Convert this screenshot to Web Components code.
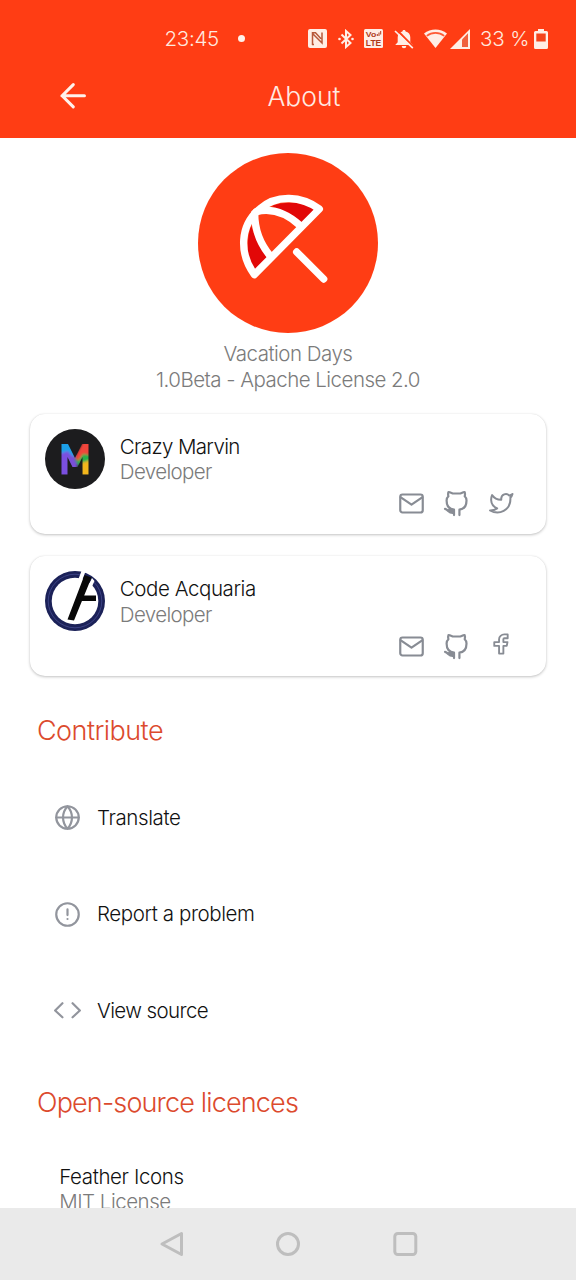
<!DOCTYPE html>
<html lang="en">
<head>
<meta charset="utf-8">
<title>About</title>
<style>
html,body{margin:0;padding:0;background:#fff}
body{font-family:Inter,"Liberation Sans",sans-serif;font-weight:300;color:#111}
</style>
</head>
<body>
<about-screen></about-screen>
<script>
function define(name, html, after) {
  const tpl = document.createElement('template');
  tpl.innerHTML = html;
  customElements.define(name, class extends HTMLElement {
    constructor() {
      super();
      this.attachShadow({ mode: 'open' }).appendChild(tpl.content.cloneNode(true));
    }
    connectedCallback() { if (after) after.call(this); }
  });
}

/* Single line of text whose tracking is adjusted to a given width. */
define('fit-text', `<style>:host{display:block;white-space:nowrap}span{display:inline-block}</style><span><slot></slot></span>`, function () {
  const span = this.shadowRoot.querySelector('span');
  const n = this.textContent.length;
  const target = parseFloat(this.getAttribute('w'));
  const natural = span.getBoundingClientRect().width;
  if (target && natural) {
    const ls = (target - natural) / n;
    this.style.letterSpacing = ls.toFixed(3) + 'px';
  }
});

const ICONS = {
  mail: '<rect x="2" y="4" width="20" height="16" rx="2"/><path d="M2.500 6.500L12 13l9.500-6.500"/>',
  github: '<path d="M9.800 22.300v-4.800C5.800 17 3.200 14 3.200 9.300c0-1.600.6-2.800 1.600-3.700-.4-1.500-.3-2.800.1-3.800 1.400.2 2.600.9 3.700 1.300h6.900c1.100-.4 2.300-1.100 3.700-1.300.4 1 .5 2.300.1 3.800 1 .9 1.600 2.100 1.600 3.700 0 4.700-2.600 7.700-6.300 8.200v4.800M9.300 20.200c-4.300.6-4.400-2.500-7.500-3.400M5 17.800c1.500.8 2.500 1 4.500 1"/>',
  twitter: '<path d="M23 3a10.900 10.900 0 0 1-3.140 1.530 4.480 4.480 0 0 0-7.860 3v1A10.660 10.660 0 0 1 3 4s-4 9 5 13a11.640 11.640 0 0 1-7 2c9 5 20 0 20-11.500a4.500 4.500 0 0 0-.08-.83A7.720 7.720 0 0 0 23 3z"/>',
  facebook: '<path d="M19.500 2h-3.500a5.500 5 0 0 0-5.500 5v3H5.500v4h5v8h4.500v-8h3.500l.8-4H15V7a1 1 0 0 1 1-1h3.500z"/>',
  globe: '<circle cx="12" cy="12" r="10"/><path d="M2 12h20M12 2a15.300 15.300 0 0 1 4 10 15.300 15.300 0 0 1-4 10 15.300 15.300 0 0 1-4-10 15.300 15.300 0 0 1 4-10z"/>',
  alert: '<circle cx="12" cy="12" r="10"/><path d="M12 7.500v5M12 16h.01"/>',
  code: '<path d="M16.500 18l6.500-6-6.500-6.500M7.500 5.500L1 12l6.500 6"/>',
  back: '<path d="M23 12H1.800M12.500 1.500L2 12l10.500 10.500"/>'
};
define('line-icon', `<style>:host{display:block;flex:none;width:27px;height:27px}svg{display:block;width:100%;height:100%;overflow:visible;fill:none;stroke:currentColor;stroke-width:var(--sw,1.950);stroke-linejoin:round;stroke-linecap:round}</style><svg viewBox="0 0 24 24"></svg>`, function () {
  this.shadowRoot.querySelector('svg').innerHTML = ICONS[this.getAttribute('name')] || '';
});

define('status-bar', `<style>
:host{display:flex;align-items:center;height:77px;box-sizing:border-box;padding-left:164.500px;color:#ffe9df;font-size:20.500px;line-height:26px}
svg{display:block;flex:none;fill:#ffeee6}
.dot{width:7px;height:7px;border-radius:50%;background:#fff1ea;margin-left:19px;margin-right:63px}
.pct{margin-left:10.500px;margin-right:4.500px;width:49px}
</style>
<fit-text w="54.500">23:45</fit-text><span class="dot"></span>
<svg width="19" height="19" viewBox="0 0 19 19"><rect width="19" height="19" rx="2"/><path d="M4.500 16V4.500L14 14V3.500M4 3.800h3.500l5.500 6M6 15.500h-2" fill="none" stroke="#b8583a" stroke-width="1.500"/></svg>
<svg width="16" height="20" viewBox="0 0 16 20" style="margin-left:11px"><path d="M3.500 5.500l9 8.500L8 18V2l4.500 4-9 8.500" fill="none" stroke="#ffeee6" stroke-width="2"/><circle cx="1.500" cy="10" r="1.300"/><circle cx="14.500" cy="10" r="1.300"/></svg>
<svg width="19" height="19" viewBox="0 0 19 19" style="margin-left:10px"><rect width="19" height="19" rx="1.500"/><g fill="#b03a1a" font-family="Liberation Sans" font-weight="700"><text x="1.800" y="7.800" font-size="7.800" textLength="10.500" lengthAdjust="spacingAndGlyphs">Vo</text><text x="1.800" y="17" font-size="8.400" textLength="15.500" lengthAdjust="spacingAndGlyphs">LTE</text></g><path d="M13.300 5v2M15 3.500v3.500M16.700 2v3.500" stroke="#b03a1a" stroke-width="1"/></svg>
<svg width="20" height="20" viewBox="0 0 20 20" style="margin-left:11px"><path d="M10 1c1 0 1.600.6 1.600 1.500 3 .7 4.700 2.900 4.700 5.700v5L18.800 16H1.200L3.700 13.200V8.200C3.700 5.400 5.400 3.200 8.400 2.500 8.400 1.600 9 1 10 1zM7.700 17h4.600a2.300 2.300 0 0 1-4.600 0z"/><path d="M2.500 .5l17 17.300" stroke="#ff3d14" stroke-width="2"/><path d="M1 2l17.800 17.200" stroke="#ffeee6" stroke-width="1.700"/></svg>
<svg width="23" height="19" viewBox="0 0 23 19" style="margin-left:10px"><path d="M0 4.500C6.500-1 16.500-1 23 4.500L11.500 19z"/><path d="M2.800 6.800c5-4 12.400-4 17.400 0" fill="none" stroke="#ff5a35" stroke-width="1.700"/></svg>
<svg width="20" height="20" viewBox="0 0 20 20" style="margin-left:2.500px"><path d="M20 0v20H0z"/><path d="M12 10.500l6-6.300V18h-6z" fill="#f0603e"/></svg>
<fit-text class="pct" w="49.500">33 %</fit-text>
<svg width="14" height="20" viewBox="0 0 14 20"><path d="M4 0h6v2h2.500q1.500 0 1.500 1.500v15q0 1.500-1.500 1.500h-11Q0 20 0 18.500v-15Q0 2 1.500 2H4z"/><path d="M2.300 4.500h9.400v8H2.300z" fill="#f4441c"/></svg>`);

define('app-header', `<style>
:host{display:block;height:137.500px;background:#ff3d14;color:#ffeae2}
.bar{display:flex;align-items:center;height:37px;padding-left:59.500px}
line-icon{width:25.500px;height:25.500px;--sw:2.900;color:#fff2ec}
fit-text{margin-left:182.500px;font-size:26.500px;line-height:32px}
</style><status-bar></status-bar><div class="bar"><line-icon name="back"></line-icon><fit-text w="71"><slot></slot></fit-text></div>`);

define('app-logo', `<style>:host{display:block;width:180px;height:180px}svg{display:block}</style>
<svg width="180" height="180" viewBox="24 22 540 540"><circle cx="294" cy="292" r="270" fill="#ff3d14"/>
<path d="M245 181C290 165 340 168 380 192L334 238C308 212 280 194 245 181z M183 240C168 290 170 335 192 378L236 332C210 304 195 275 183 240z" fill="#e20808"/>
<g fill="none" stroke="#fff" stroke-width="22" stroke-linejoin="round" stroke-linecap="round"><path d="M193 387L388 190C335 151 260 145 209 190C149 240 147 322 193 387z"/><path d="M194 203C194 246 209 293 240 330M199 198C246 186 293 205 332 241M320 319L401 400"/></g></svg>`);

define('app-summary', `<style>
:host{display:flex;flex-direction:column;align-items:center;padding-top:15px;color:#7b7b7b;font-size:20.500px;line-height:25.800px}
app-logo{margin-bottom:8.300px}
</style><app-logo></app-logo><slot></slot>`);

define('avatar-marvin', `<style>:host{display:block;width:60px;height:60px}svg{display:block}</style>
<svg width="60" height="60" viewBox="0 0 60 60"><defs><filter id="b" x="-20%" y="-20%" width="140%" height="140%"><feGaussianBlur stdDeviation=".9"/></filter><clipPath id="m"><path d="M16.500 45.500V15H23L30 29l7-14h6.500v30.500h-6V28L32.500 38h-5L22.500 28v17.500z"/></clipPath></defs>
<circle cx="30" cy="30" r="30" fill="#1c1c1e"/><g clip-path="url(#m)"><g filter="url(#b)"><path d="M14 13h16v18H14z" fill="#1ba0e8"/><path d="M14 25l9-3 9 12v13H14z" fill="#7a4fe0"/><path d="M22 25l8 3 2 11-6 1z" fill="#7a50d8"/><path d="M30 30l7-6 8 2v12l-10 2z" fill="#28b04c"/><path d="M30 28l8-15h8v13l-8-1-5 7z" fill="#f0443a"/><path d="M36 34l10-3v16H36z" fill="#f2b61c"/></g></g></svg>`);

define('avatar-acquaria', `<style>:host{display:block;width:60px;height:60px}svg{display:block}</style>
<svg width="60" height="60" viewBox="0 0 60 60"><circle cx="30" cy="30" r="30" fill="#1b2158"/><circle cx="30" cy="30" r="26.800" fill="none" stroke="#3c4284" stroke-width="1"/><circle cx="30" cy="30" r="23.300" fill="#fff"/><path d="M36.500 0l4 .5L23 47l-4-1z M47 7l2.500 3-5.500 12-4-1z" fill="#fff"/><path d="M39.500 4L46.500 6.500 29 49.500l-6.500-1z M37.500 24.500H51v5.500H35.500z" fill="#080808"/></svg>`);

define('person-card', `<style>
:host{display:flex;flex-direction:column;justify-content:space-between;box-sizing:border-box;height:120px;margin:0 30px;padding:15px 31px 0 15px;border-radius:15px;background:#fff;box-shadow:0 1px 3px rgba(0,0,0,.24),0 0 1px rgba(0,0,0,.1);font-size:20.500px;line-height:25.500px}
.top{display:flex;gap:14.800px}
.txt{padding-top:4.800px;color:#111}
::slotted([slot=role]){color:#7b7b7b}
.links{display:flex;justify-content:flex-end;gap:18px;color:#888c94;height:43.500px;align-items:flex-start}
</style><div class="top"><slot name="avatar"></slot><div class="txt"><slot name="name"></slot><slot name="role"></slot></div></div><div class="links"><slot name="links"></slot></div>`);

define('section-title', `<style>:host{display:block;padding-left:37px;font-size:27px;line-height:32px;color:#dc4a2d}</style><slot></slot>`);

define('action-row', `<style>:host{display:flex;align-items:center;height:96.500px;padding-left:53.500px;gap:16.500px;font-size:20.500px;line-height:26px;color:#111}line-icon{color:#92959d}</style><line-icon></line-icon><slot></slot>`, function () {
  const i = this.shadowRoot.querySelector('line-icon');
  i.shadowRoot.querySelector('svg').innerHTML = ICONS[this.getAttribute('icon')];
});

define('license-row', `<style>:host{display:block;padding:45px 0 0 59.200px;font-size:20.500px;line-height:25.500px;color:#111}::slotted([slot=sub]){color:#7b7b7b}</style><slot></slot><slot name="sub"></slot>`);

define('nav-bar', `<style>:host{display:flex;align-items:center;justify-content:center;gap:93px;box-sizing:border-box;height:72px;background:#eaeaea}svg{display:block;overflow:visible;fill:none;stroke:#bebebe;stroke-width:3;stroke-linejoin:round}</style>
<svg width="24" height="24"><path d="M22.500 1.500v21L3 12z"/></svg><svg width="24" height="24"><circle cx="12" cy="12" r="10.500"/></svg><svg width="24" height="24"><rect x="1.800" y="1.500" width="21" height="21" rx="3"/></svg>`);

define('about-screen', `<style>
:host{display:flex;flex-direction:column;width:576px;height:1280px;overflow:hidden;background:#fff}
main{flex:1;min-height:0;overflow:hidden}
app-header,nav-bar{flex:none}
.cards{display:flex;flex-direction:column;gap:22.500px;padding-top:21.500px}
.tw{width:24.500px;height:24.500px;margin-left:1px;margin-right:1.500px;margin-top:1px}
.fb{width:23px;height:24px;margin:-.5px 3px 0 1px}
.c{margin-top:39px;margin-bottom:22px}.o{margin-top:28px}
</style>
<app-header>About</app-header>
<main>
<app-summary><fit-text w="128.800">Vacation Days</fit-text><fit-text w="264">1.0Beta - Apache License 2.0</fit-text></app-summary>
<div class="cards">
<person-card><avatar-marvin slot="avatar"></avatar-marvin><fit-text slot="name" w="120">Crazy Marvin</fit-text><fit-text slot="role" w="92">Developer</fit-text><line-icon slot="links" name="mail"></line-icon><line-icon slot="links" name="github"></line-icon><line-icon slot="links" class="tw" name="twitter"></line-icon></person-card>
<person-card><avatar-acquaria slot="avatar"></avatar-acquaria><fit-text slot="name" w="136">Code Acquaria</fit-text><fit-text slot="role" w="92">Developer</fit-text><line-icon slot="links" name="mail"></line-icon><line-icon slot="links" name="github"></line-icon><line-icon slot="links" class="fb" name="facebook"></line-icon></person-card>
</div>
<section-title class="c"><fit-text w="126">Contribute</fit-text></section-title>
<action-row icon="globe"><fit-text w="83.500">Translate</fit-text></action-row>
<action-row icon="alert"><fit-text w="157.500">Report a problem</fit-text></action-row>
<action-row icon="code"><fit-text w="111">View source</fit-text></action-row>
<section-title class="o"><fit-text w="261">Open-source licences</fit-text></section-title>
<license-row><fit-text w="124.500">Feather Icons</fit-text><fit-text slot="sub" w="111.500">MIT License</fit-text></license-row>
</main>
<nav-bar></nav-bar>`);
</script>
</body>
</html>
